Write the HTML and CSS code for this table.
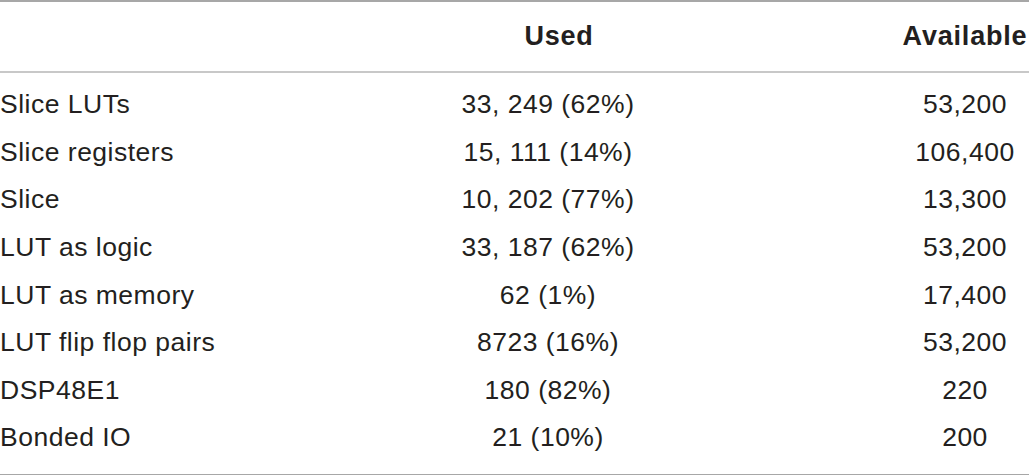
FILE: index.html
```html
<!DOCTYPE html>
<html>
<head>
<meta charset="utf-8">
<link rel="stylesheet" href="styles.css">
</head>
<body>
<div class="table">
  <div class="row head">
    <div class="name"></div>
    <div class="used">Used</div>
    <div class="avail">Available</div>
  </div>
  <div class="tbody">
    <div class="row"><div class="name">Slice LUTs</div><div class="used">33, 249 (62%)</div><div class="avail">53,200</div></div>
    <div class="row"><div class="name">Slice registers</div><div class="used">15, 111 (14%)</div><div class="avail">106,400</div></div>
    <div class="row"><div class="name">Slice</div><div class="used">10, 202 (77%)</div><div class="avail">13,300</div></div>
    <div class="row"><div class="name">LUT as logic</div><div class="used">33, 187 (62%)</div><div class="avail">53,200</div></div>
    <div class="row"><div class="name">LUT as memory</div><div class="used">62 (1%)</div><div class="avail">17,400</div></div>
    <div class="row"><div class="name">LUT flip flop pairs</div><div class="used">8723 (16%)</div><div class="avail">53,200</div></div>
    <div class="row"><div class="name">DSP48E1</div><div class="used">180 (82%)</div><div class="avail">220</div></div>
    <div class="row"><div class="name">Bonded IO</div><div class="used">21 (10%)</div><div class="avail">200</div></div>
  </div>
</div>
</body>
</html>
```
FILE: styles.css
```css
html, body {
  margin: 0;
  padding: 0;
  background: #ffffff;
}
body {
  font-family: "Liberation Sans", Arial, sans-serif;
  font-size: 26.5px;
  letter-spacing: 0.5px;
  color: #231f20;
}
.table {
  width: 1029px;
  border-top: 2px solid #a7a7a7;
  border-bottom: 2px solid #a7a7a7;
}
.row {
  display: grid;
  grid-template-columns: 400px 296px 1fr;
  height: 47.6px;
  align-items: center;
}
.head {
  height: 69px;
  font-weight: bold;
  font-size: 27px;
  letter-spacing: 0.8px;
  border-bottom: 2px solid #c8c8c8;
}
.head .used {
  padding-left: 22px;
}
.tbody {
  padding: 8px 0 12px;
}
.name {
  white-space: nowrap;
}
.used {
  text-align: center;
  white-space: nowrap;
}
.avail {
  justify-self: end;
  width: 128px;
  text-align: center;
  white-space: nowrap;
}
```
